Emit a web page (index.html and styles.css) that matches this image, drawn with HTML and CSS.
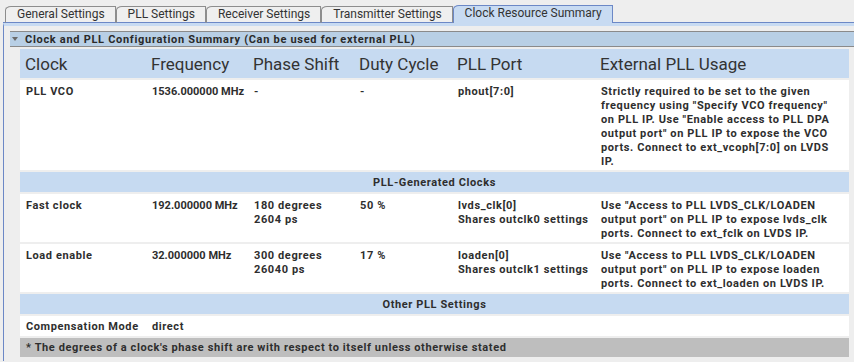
FILE: index.html
```html
<!DOCTYPE html>
<html lang="en">
<head>
    <meta charset="UTF-8">
    <title>Clock Resource Summary</title>
    <link rel="stylesheet" href="styles.css">
</head>
<body>

<div class="tabbar">
    <span class="tab-gap"></span>
    <span class="tab">General Settings</span>
    <span class="tab">PLL Settings</span>
    <span class="tab">Receiver Settings</span>
    <span class="tab">Transmitter Settings</span>
    <span class="tab active">Clock Resource Summary</span>
    <span class="tab-fill"></span>
</div>

<div class="panel">
    <div class="section">
        <span class="arrow"></span>
        Clock and PLL Configuration Summary (Can be used for external PLL)
    </div>

    <div class="wrap">
        <table class="summary">
            <colgroup>
                <col class="c-clock">
                <col class="c-freq">
                <col class="c-phase">
                <col class="c-duty">
                <col class="c-port">
                <col>
            </colgroup>
            <tr class="head">
                <th>Clock</th>
                <th>Frequency</th>
                <th>Phase Shift</th>
                <th>Duty Cycle</th>
                <th>PLL Port</th>
                <th>External PLL Usage</th>
            </tr>
            <tr>
                <td>PLL VCO</td>
                <td class="num">1536.000000 MHz</td>
                <td>-</td>
                <td>-</td>
                <td class="port">phout[7:0]</td>
                <td>Strictly required to be set to the given frequency using "Specify VCO frequency" on PLL IP. Use "Enable access to PLL DPA output port" on PLL IP to expose the VCO ports. Connect to ext_vcoph[7:0] on LVDS IP.</td>
            </tr>
            <tr class="band">
                <td colspan="6">PLL-Generated Clocks</td>
            </tr>
            <tr>
                <td>Fast clock</td>
                <td class="num">192.000000 MHz</td>
                <td>180 degrees<br>2604 ps</td>
                <td>50 %</td>
                <td class="port">lvds_clk[0]<br>Shares outclk0 settings</td>
                <td>Use "Access to PLL LVDS_CLK/LOADEN output port" on PLL IP to expose lvds_clk ports. Connect to ext_fclk on LVDS IP.</td>
            </tr>
            <tr>
                <td>Load enable</td>
                <td class="num">32.000000 MHz</td>
                <td>300 degrees<br>26040 ps</td>
                <td>17 %</td>
                <td class="port">loaden[0]<br>Shares outclk1 settings</td>
                <td>Use "Access to PLL LVDS_CLK/LOADEN output port" on PLL IP to expose loaden ports. Connect to ext_loaden on LVDS IP.</td>
            </tr>
            <tr class="band">
                <td colspan="6">Other PLL Settings</td>
            </tr>
            <tr class="single">
                <td>Compensation Mode</td>
                <td colspan="5">direct</td>
            </tr>
        </table>
        <div class="note">* The degrees of a clock's phase shift are with respect to itself unless otherwise stated</div>
    </div>
</div>

</body>
</html>
```

FILE: styles.css
```css
body {
    margin: 0;
    padding-top: 5px;
    background-color: #eeeeee;
    font-family: Roboto, "Liberation Sans", sans-serif;
    color: #2e2e2e;
    overflow: hidden;
}

/* tab strip */
.tabbar {
    display: flex;
    align-items: flex-end;
    margin-left: 3px;
    height: 18px;
}

.tab-gap {
    width: 2px;
    height: 0;
    border-bottom: 1px solid #6c88c6;
}

.tab {
    box-sizing: border-box;
    height: 17px;
    padding: 0 10px 0 11px;
    border: 1px solid #8d8d8d;
    border-bottom-color: #6c88c6;
    border-top-left-radius: 6px 4px;
    background-color: #efefef;
    font-size: 12px;
    line-height: 15px;
    white-space: nowrap;
    color: #333;
}

.tab.active {
    height: 18px;
    border-color: #6c88c6;
    border-bottom: none;
    background-color: #c8dbf2;
}

.tab-fill {
    flex: 1;
    height: 0;
    border-bottom: 1px solid #6c88c6;
}

/* content panel */
.panel {
    margin-left: 3px;
    border-left: 1px solid #6c88c6;
    border-top: 3px solid #c8dbf2;
    padding: 5px 0 4px 6px;
}

.section {
    display: flex;
    align-items: center;
    height: 14px;
    border-top: 1px solid #8a8a8a;
    border-bottom: 1px solid #8a8a8a;
    background-color: #b8cfe5;
    font-size: 11px;
    font-weight: bold;
    letter-spacing: 0.7px;
    white-space: nowrap;
    color: #2a2a2a;
}

.arrow {
    width: 0;
    height: 0;
    margin: 0 7px 0 2px;
    border-left: 3.5px solid transparent;
    border-right: 3.5px solid transparent;
    border-top: 4px solid #6a6a6a;
}

.wrap {
    margin: 0 5px 0 10px;
}

.summary {
    width: 829px;
    table-layout: fixed;
    border-collapse: separate;
    border-spacing: 0 2px;
}

.c-clock { width: 126px; }
.c-freq  { width: 102px; }
.c-phase { width: 106px; }
.c-duty  { width: 98px; }
.c-port  { width: 143px; }

.summary td {
    background-color: #ffffff;
    padding: 5px 10px 1px 6px;
    vertical-align: top;
    font-size: 11px;
    font-weight: bold;
    letter-spacing: 0.6px;
    line-height: 14px;
    color: #2e2e2e;
}

.summary td.num {
    padding-right: 0;
    letter-spacing: 0;
    white-space: nowrap;
}

.summary td.port {
    padding-right: 0;
    white-space: nowrap;
}

.head th {
    height: 29px;
    padding: 0 5px;
    background-color: #c6daf1;
    text-align: left;
    font-size: 17px;
    font-weight: normal;
    color: #333;
}

.summary .band td {
    height: 19px;
    padding: 1px 0 0;
    background-color: #c6daf1;
    text-align: center;
    vertical-align: middle;
}

.summary .single td {
    height: 19px;
    padding-top: 1px;
    padding-bottom: 0;
    padding-right: 0;
    vertical-align: middle;
    white-space: nowrap;
}

.note {
    height: 19px;
    line-height: 20px;
    padding-left: 6px;
    background-color: #bebebe;
    font-size: 11px;
    font-weight: bold;
    letter-spacing: 0.6px;
    white-space: nowrap;
    color: #2e2e2e;
}
```
